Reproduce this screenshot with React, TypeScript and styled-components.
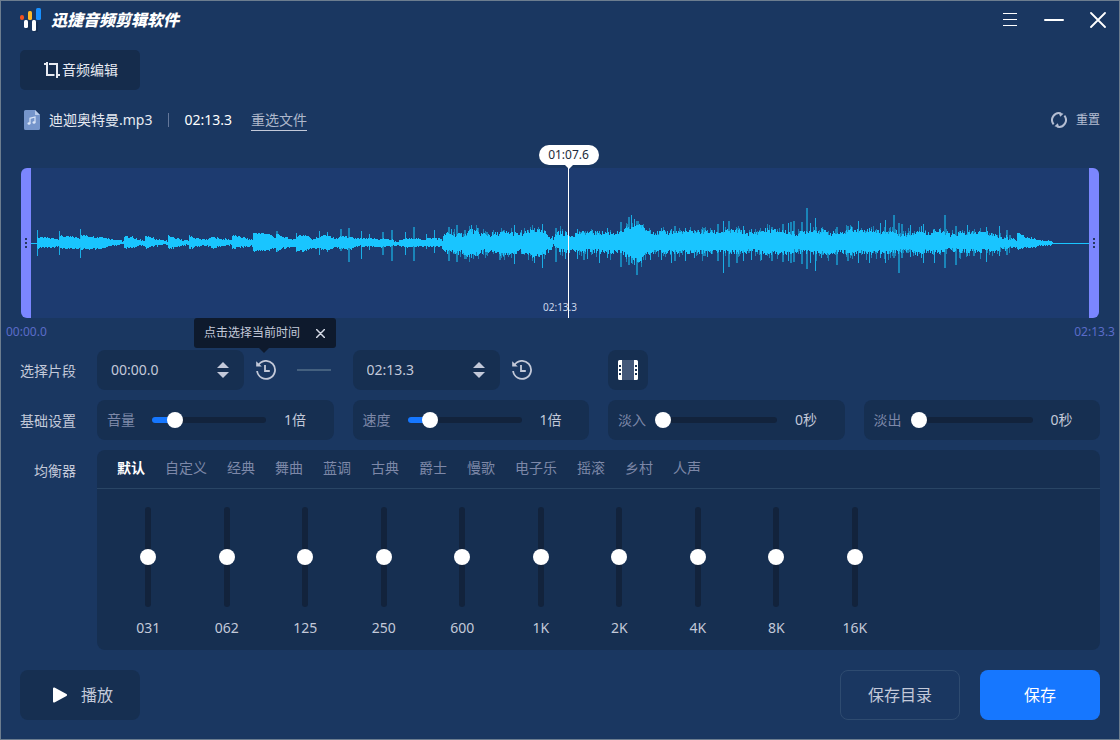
import React, { useState } from 'react';
import styled, { createGlobalStyle } from 'styled-components';

const color = {
  bg: '#1a3761',
  edge: '#6c7d8f',
  panel: '#162f51',
  tab: '#152c4c',
  track: '#12233c',
  wave: '#1d3b70',
  cyan: '#19c5ff',
  handle: '#7b86ff',
  accent: '#1677ff',
  text: '#c3c9d9',
  bright: '#e6eaf2',
  dim: '#7d88a8',
  rule: '#294565',
  tip: '#0e1a2d',
  time: '#5a6cc8',
};

const GlobalStyle = createGlobalStyle`
  *, *::before, *::after { box-sizing: border-box; }
  body {
    margin: 0;
    background: ${color.bg};
    color: ${color.text};
    font-family: "Noto Sans", "Noto Sans CJK SC", sans-serif;
    font-size: 14px;
    line-height: 20px;
  }
  button, input { font: inherit; color: inherit; margin: 0; }
  button { border: 0; padding: 0; background: none; cursor: pointer; }
  svg { display: block; flex: none; }
`;

const Window = styled.div`
  min-height: 100vh;
  display: flex;
  flex-direction: column;
  border: 1px solid ${color.edge};
  background: ${color.bg};
`;

const TitleBar = styled.header`
  display: flex;
  align-items: center;
  justify-content: space-between;
  height: 38px;
  padding: 0 11px 0 19px;
`;

const Brand = styled.h1`
  display: flex;
  align-items: center;
  gap: 8px;
  margin: 0;
  font-size: 16px;
  font-weight: 900;
  font-style: italic;
  color: #fff;
`;

const WindowControls = styled.div`
  display: flex;
  align-items: center;
  gap: 24px;
`;

const IconButton = styled.button`
  display: flex;
  align-items: center;
  justify-content: center;
  min-width: 20px;
  height: 24px;
  color: ${(p) => p.color || '#fff'};
`;

const Toolbar = styled.nav`
  display: flex;
  padding: 11px 19px 0;
`;

const ModeButton = styled.button`
  display: flex;
  align-items: center;
  justify-content: center;
  gap: 2px;
  width: 120px;
  height: 40px;
  padding-left: 2px;
  border-radius: 5px;
  background: ${color.tab};
  color: ${color.bright};
`;

const FileRow = styled.div`
  display: flex;
  align-items: center;
  height: 40px;
  margin-top: 10px;
  padding: 0 19px 0 23px;
`;

const FileName = styled.span`
  margin-left: 9px;
  color: ${color.bright};
`;

const Divider = styled.span`
  width: 1px;
  height: 14px;
  margin: 0 15px 0 16px;
  background: #64779a;
`;

const Duration = styled.span`
  color: #fff;
`;

const ReselectLink = styled.a`
  margin-left: 19px;
  border-bottom: 1px solid ${color.text};
  color: #aeb7cb;
  text-decoration: none;
`;

const ResetButton = styled.button`
  display: flex;
  align-items: center;
  gap: 9px;
  margin-left: auto;
  font-size: 12px;
  color: #b4bdd2;
`;

const Track = styled.section`
  display: flex;
  height: 150px;
  margin: 28px 20px 0;
  background: ${color.wave};
  border-radius: 6px;
`;

const Handle = styled.button<{ $side: 'left' | 'right' }>`
  display: flex;
  align-items: center;
  justify-content: center;
  width: 10px;
  border-radius: ${(p) => (p.$side === 'left' ? '6px 0 0 6px' : '0 6px 6px 0')};
  background: ${color.handle};
  color: #253762;
`;

const Stage = styled.div`
  position: relative;
  flex: 1;
  min-width: 0;
`;

const WaveSvg = styled.svg`
  width: 100%;
  height: 150px;
`;

const TrackLength = styled.span`
  position: absolute;
  left: 0;
  right: 0;
  bottom: 1px;
  font-size: 10px;
  text-align: center;
  color: #ccd6ea;
`;

const Playhead = styled.div`
  position: absolute;
  top: 0;
  bottom: 0;
  width: 1px;
  background: #fff;
`;

const PlayheadTime = styled.span`
  position: absolute;
  left: -29px;
  bottom: 153px;
  width: 60px;
  border-radius: 10px;
  background: #fff;
  color: #222b3a;
  font-size: 12px;
  text-align: center;

  &::after {
    content: '';
    position: absolute;
    top: 19px;
    left: 25px;
    border: 5px solid transparent;
    border-top-color: #fff;
    border-bottom: 0;
  }
`;

const TimeScale = styled.div`
  display: flex;
  justify-content: space-between;
  height: 32px;
  padding: 4px 4px 0 5px;
  font-size: 12px;
  color: ${color.time};
`;

const Settings = styled.main`
  display: grid;
  grid-template-columns: 56px 1fr;
  column-gap: 21px;
  row-gap: 10px;
  padding: 0 19px;
`;

const RowTitle = styled.h2`
  margin: 0;
  font-size: 14px;
  font-weight: 400;
  line-height: 42px;
  height: 40px;
  text-align: right;
  white-space: nowrap;
`;

const Quarter = styled.div`
  display: grid;
  grid-template-columns: repeat(4, 1fr);
  gap: 19px;
`;

const RangeCell = styled.div`
  display: flex;
  align-items: center;
`;

const TimeField = styled.div`
  display: flex;
  align-items: center;
  width: 147px;
  height: 40px;
  padding: 0 15px 0 14px;
  border-radius: 8px;
  background: ${color.panel};
`;

const TimeInput = styled.input`
  flex: 1;
  min-width: 0;
  padding: 0;
  border: 0;
  outline: 0;
  background: transparent;
`;

const Stepper = styled.div`
  display: flex;
  flex-direction: column;
  gap: 4px;
  color: ${color.text};
`;

const HistoryBox = styled.div`
  position: relative;
  margin-left: 12px;
`;

const Tooltip = styled.div`
  position: absolute;
  left: -62px;
  bottom: 34px;
  z-index: 2;
  display: flex;
  align-items: center;
  justify-content: space-between;
  width: 142px;
  height: 30px;
  padding: 0 11px 0 10px;
  border-radius: 3px;
  background: ${color.tip};
  font-size: 12px;
  white-space: nowrap;

  &::after {
    content: '';
    position: absolute;
    top: 30px;
    left: 65px;
    border: 5px solid transparent;
    border-top-color: ${color.tip};
    border-bottom: 0;
  }
`;

const TipClose = styled.button`
  color: #d5dae6;
`;

const Dash = styled.span`
  width: 34px;
  height: 2px;
  margin-left: 21px;
  background: #44607f;
`;

const FilmButton = styled.button`
  display: flex;
  align-items: center;
  justify-content: center;
  width: 40px;
  height: 40px;
  border-radius: 8px;
  background: ${color.panel};
`;

const Control = styled.div`
  display: flex;
  align-items: center;
  height: 40px;
  padding-left: 10px;
  border-radius: 8px;
  background: ${color.panel};
`;

const ControlLabel = styled.label`
  width: 28px;
  margin-right: 9px;
  color: ${color.dim};
`;

const ControlValue = styled.output`
  margin-left: 10px;
`;

const SliderBox = styled.div<{ $vertical?: boolean }>`
  display: grid;
  place-items: center;
  width: ${(p) => (p.$vertical ? '16px' : '130px')};
  height: ${(p) => (p.$vertical ? '116px' : '16px')};

  > * { grid-area: 1 / 1; }
`;

const Rail = styled.div<{ $vertical?: boolean }>`
  width: ${(p) => (p.$vertical ? '6px' : '114px')};
  height: ${(p) => (p.$vertical ? '100px' : '6px')};
  border-radius: 3px;
  background: ${color.track};
`;

const Fill = styled.div`
  height: 6px;
  border-radius: 3px;
  background: ${color.accent};
`;

const Range = styled.input<{ $vertical?: boolean }>`
  appearance: none;
  width: 100%;
  height: 100%;
  background: transparent;
  cursor: pointer;
  ${(p) => (p.$vertical ? 'writing-mode: vertical-lr; direction: rtl;' : '')}

  &::-webkit-slider-thumb {
    appearance: none;
    width: 16px;
    height: 16px;
    border-radius: 50%;
    background: #fff;
  }
`;

const Equalizer = styled.section`
  height: 200px;
  border-radius: 8px;
  background: ${color.panel};
`;

const Presets = styled.div`
  display: flex;
  gap: 20px;
  height: 39px;
  padding: 0 20px;
  border-bottom: 1px solid ${color.rule};
`;

const Preset = styled.button<{ $active?: boolean }>`
  height: 36px;
  font-weight: ${(p) => (p.$active ? 700 : 400)};
  color: ${(p) => (p.$active ? '#fff' : color.dim)};
`;

const Bands = styled.div`
  display: grid;
  grid-template-columns: repeat(10, 1fr);
  width: 785px;
  margin: 10px 0 0 12px;
`;

const Band = styled.label`
  display: flex;
  flex-direction: column;
  align-items: center;
  gap: 3px;
`;

const Footer = styled.footer`
  display: flex;
  gap: 20px;
  padding: 20px 19px 19px;
`;

const ActionButton = styled.button<{ $kind: 'play' | 'outline' | 'primary' }>`
  display: flex;
  align-items: center;
  justify-content: center;
  gap: 14px;
  width: 120px;
  height: 50px;
  margin-right: ${(p) => (p.$kind === 'play' ? 'auto' : '0')};
  padding-left: ${(p) => (p.$kind === 'play' ? '6px' : '0')};
  border: ${(p) => (p.$kind === 'outline' ? '1px solid #2e4b70' : '0')};
  border-radius: 8px;
  background: ${(p) =>
    p.$kind === 'primary' ? color.accent : p.$kind === 'play' ? color.panel : 'transparent'};
  color: ${(p) => (p.$kind === 'primary' ? '#fff' : color.text)};
  font-size: 16px;
`;

/* Waveform outline: x, height above the axis, depth below it. */
const outline: number[][] = [
  [6, 6, 5], [14, 5, 4], [27, 4, 4], [28, 7, 5], [39, 6, 6], [49, 5, 5], [50, 8, 6], [64, 6, 6],
  [72, 6, 5], [80, 4, 3], [92, 2, 1], [93, 6, 5], [101, 6, 5], [107, 3, 3], [113, 3, 2], [114, 7, 5],
  [124, 4, 3], [136, 2, 1], [137, 7, 6], [145, 4, 4], [157, 2, 2], [158, 7, 6], [163, 5, 4],
  [174, 3, 2], [182, 6, 5], [190, 4, 3], [200, 3, 2], [201, 8, 6], [209, 6, 4], [221, 3, 3],
  [222, 10, 8], [237, 9, 7], [244, 5, 5], [245, 9, 8], [252, 6, 5], [264, 3, 4], [265, 7, 8],
  [274, 8, 8], [281, 4, 5], [289, 6, 6], [296, 8, 7], [304, 4, 4], [311, 7, 6], [319, 5, 6],
  [329, 4, 3], [354, 4, 4], [361, 3, 3], [366, 1, 2], [374, 4, 4], [384, 5, 4], [389, 3, 3],
  [399, 5, 4], [411, 4, 4], [414, 9, 8], [424, 8, 9], [434, 8, 10], [439, 13, 13], [449, 9, 9],
  [459, 8, 8], [469, 10, 11], [481, 10, 12], [489, 8, 8], [502, 13, 13], [514, 10, 10],
  [522, 4, 3], [526, 11, 7], [539, 8, 8], [549, 10, 8], [589, 10, 9], [594, 13, 12], [601, 16, 15],
  [607, 19, 19], [614, 13, 12], [624, 10, 9], [650, 11, 9], [688, 11, 9], [704, 12, 9],
  [720, 9, 8], [735, 13, 10], [755, 11, 10], [765, 9, 8], [780, 13, 9], [798, 10, 10],
  [810, 9, 8], [820, 14, 11], [829, 12, 9], [840, 13, 10], [850, 10, 9], [855, 11, 9],
  [862, 11, 9], [872, 8, 8], [880, 9, 8], [887, 13, 11], [895, 9, 8], [904, 12, 9], [915, 10, 8],
  [920, 7, 6], [929, 10, 8], [939, 9, 8], [949, 11, 8], [959, 9, 8], [969, 6, 6], [979, 5, 5],
  [984, 3, 4], [985, 2, 3], [986, 11, 7], [994, 6, 5], [1009, 3, 3], [1019, 2, 2], [1022, 0, 0],
];

/* Transient peaks: x, up, down, 1 when drawn faint. */
const peaks: number[][] = [
  [6, 13, 13, 0], [28, 12, 12, 0], [49, 14, 15, 0], [158, 8, 6, 0], [245, 12, 9, 1], [265, 10, 9, 0],
  [288, 12, 12, 0], [296, 11, 9, 0], [309, 14, 8, 1], [317, 15, 19, 1], [330, 12, 16, 0],
  [338, 9, 7, 0], [351, 11, 12, 1], [360, 13, 18, 1], [374, 11, 12, 0], [382, 16, 18, 1],
  [395, 9, 6, 0], [403, 13, 10, 0], [417, 16, 18, 1], [420, 14, 9, 0], [425, 18, 19, 1],
  [433, 13, 16, 1], [440, 18, 15, 0], [446, 15, 10, 0], [468, 6, 17, 1], [483, 18, 21, 0],
  [490, 13, 11, 0], [503, 15, 20, 0], [511, 19, 25, 0], [524, 15, 19, 1], [534, 12, 16, 0],
  [546, 14, 16, 0], [552, 11, 17, 1], [556, 9, 16, 0], [561, 13, 11, 0], [568, 12, 20, 0],
  [576, 15, 15, 0], [589, 21, 24, 1], [595, 17, 16, 0], [597, 26, 22, 1], [600, 28, 20, 0],
  [603, 24, 22, 0], [605, 22, 32, 1], [610, 18, 20, 0], [619, 13, 17, 0], [630, 15, 17, 0],
  [640, 14, 20, 0], [643, 17, 18, 1], [654, 15, 18, 0], [663, 13, 15, 0], [672, 15, 13, 1],
  [676, 13, 14, 0], [686, 19, 18, 1], [692, 22, 30, 0], [697, 22, 24, 1], [705, 15, 20, 1],
  [712, 17, 18, 0], [720, 14, 17, 0], [730, 12, 17, 0], [740, 16, 18, 1], [751, 19, 19, 1],
  [757, 20, 18, 0], [759, 21, 20, 1], [762, 22, 19, 1], [770, 21, 21, 1], [775, 35, 26, 1],
  [779, 20, 20, 0], [784, 25, 28, 0], [790, 15, 15, 0], [805, 16, 22, 1], [816, 17, 18, 1],
  [827, 22, 20, 0], [838, 14, 20, 0], [849, 20, 15, 0], [854, 23, 20, 0], [862, 28, 15, 1],
  [867, 20, 30, 1], [870, 19, 15, 1], [879, 18, 14, 0], [890, 17, 15, 0], [892, 19, 20, 0],
  [903, 14, 20, 0], [913, 28, 25, 1], [924, 17, 22, 1], [936, 18, 13, 0], [942, 12, 13, 1],
  [955, 16, 19, 0], [968, 17, 13, 0], [975, 13, 12, 1],
];

const noise = (n: number) => {
  const v = Math.sin(n * 12.9898) * 43758.5453;
  return v - Math.floor(v);
};

const AXIS = 75;

function buildWave() {
  let body = '';
  let bright = '';
  let faint = '';
  const bar = (x: number, up: number, down: number, w = 1) =>
    `M${x} ${AXIS - up}h${w}v${up + down}h-${w}z`;
  for (let i = 0; i < outline.length - 1; i += 1) {
    const [x0, u0, d0] = outline[i];
    const [x1, u1, d1] = outline[i + 1];
    for (let x = x0; x < x1; x += 1) {
      const t = (x - x0) / (x1 - x0);
      const up = u0 + (u1 - u0) * t;
      const down = d0 + (d1 - d0) * t;
      const loud = x > 410 && x < 980;
      const j = loud ? 5 : 2;
      const a = Math.max(0, Math.round(up + (noise(x) - 0.5) * j));
      const b = Math.max(1, Math.round(down + (noise(x + 2000) - 0.5) * j));
      body += bar(x, a, b);
      if (loud && noise(x + 5000) > 0.75) {
        faint += bar(x, a + Math.round(noise(x + 7000) * 5), b + Math.round(noise(x + 9000) * 7));
      }
    }
  }
  peaks.forEach(([x, up, down, soft]) => {
    if (soft) faint += bar(x, up, down, 2);
    else bright += bar(x, up, down);
  });
  return { body, bright, faint };
}

const wave = buildWave();

function Waveform() {
  return (
    <WaveSvg viewBox="0 0 1058 150" preserveAspectRatio="none" shapeRendering="crispEdges" aria-hidden="true">
      <path d={wave.faint} fill="#1a85b9" />
      <path d={wave.bright} fill="#1aaee6" />
      <path d={wave.body} fill={color.cyan} />
      <path d="M0 75h7v1h-7zM1018 75h40v1h-40z" fill={color.cyan} />
    </WaveSvg>
  );
}

const Logo = () => (
  <svg width="23" height="25" viewBox="0 0 23 25" aria-hidden="true">
    <path d="M6 12h4v10H7l-1-1zM14 14h4v10h-3l-1-1z" fill="#102849" opacity=".6" />
    <rect x="0" y="7" width="4" height="5" rx="2" fill="#f4511e" />
    <rect x="4" y="12" width="4" height="8" rx="1.5" fill="#fff" />
    <rect x="8" y="3" width="4" height="9" rx="1.5" fill="#fdb92c" />
    <rect x="12" y="12" width="4" height="11" rx="1.5" fill="#fff" />
    <rect x="16" y="0" width="5" height="12" rx="1.5" fill="#1890ff" />
  </svg>
);

const MenuIcon = () => (
  <svg width="14" height="14" viewBox="0 0 14 14" shapeRendering="crispEdges" aria-hidden="true">
    <path d="M0 0h14v1H0zM0 6h14v1H0zM0 12h14v1H0z" fill="currentColor" />
  </svg>
);

const MinimizeIcon = () => (
  <svg width="20" height="2" viewBox="0 0 20 2" aria-hidden="true">
    <rect width="20" height="2" rx="1" fill="currentColor" />
  </svg>
);

const CrossIcon = ({ size, weight }: { size: number; weight: number }) => (
  <svg width={size} height={size} viewBox="0 0 16 16" aria-hidden="true">
    <path d="M1 1l14 14M15 1L1 15" stroke="currentColor" strokeWidth={weight} strokeLinecap="round" />
  </svg>
);

const CropIcon = () => (
  <svg width="16" height="16" viewBox="0 0 16 16" aria-hidden="true">
    <path d="M0 2h3M3 0v13h7.500M5 2h8v11M14 13h2M13 13v3" fill="none" stroke="currentColor" strokeWidth="2" />
  </svg>
);

const MusicFileIcon = () => (
  <svg width="16" height="20" viewBox="0 0 16 20" aria-hidden="true">
    <path d="M1.500 0H11l5 5v13.500a1.500 1.500 0 0 1-1.500 1.500h-13A1.500 1.500 0 0 1 0 18.500v-17A1.500 1.500 0 0 1 1.500 0z" fill="#7595cb" />
    <path d="M11 0l5 5h-5z" fill="#b9cbea" />
    <path d="M6 13.500V8.300l5-1.300v5.500" fill="none" stroke="#dbe6f8" strokeWidth="1.200" />
    <ellipse cx="5" cy="13.500" rx="1.500" ry="1.300" fill="#dbe6f8" />
    <ellipse cx="10" cy="12.500" rx="1.500" ry="1.300" fill="#dbe6f8" />
  </svg>
);

const ResetIcon = () => (
  <svg width="16" height="16" viewBox="0 0 16 16" aria-hidden="true">
    <path
      d="M2.600 12.300A6.900 6.900 0 0 1 10 1.400M13.400 3.700A6.900 6.900 0 0 1 6 14.600"
      fill="none"
      stroke="currentColor"
      strokeWidth="2"
    />
    <path d="M7.500.3l5 1.500-3.300 3zM8.500 15.700l-5-1.500 3.300-3z" fill="currentColor" />
  </svg>
);

const GripIcon = () => (
  <svg width="2" height="11" viewBox="0 0 2 11" shapeRendering="crispEdges" aria-hidden="true">
    <path d="M0 0h2v2H0zM0 4h2v2H0zM0 8h2v2H0z" fill="currentColor" />
  </svg>
);

const ArrowIcon = ({ down }: { down?: boolean }) => (
  <svg width="12" height="6" viewBox="0 0 12 6" aria-hidden="true">
    <path d={down ? 'M0 0h12L6 6z' : 'M0 6h12L6 0z'} fill="currentColor" />
  </svg>
);

const HistoryIcon = () => (
  <svg width="20" height="20" viewBox="0 0 20 20" aria-hidden="true">
    <path d="M2.300 5.300A9 9 0 1 1 1.100 11" fill="none" stroke="currentColor" strokeWidth="1.800" />
    <path d="M.2 1.200v5.300h5.600z" fill="currentColor" />
    <path d="M9 5v6h4.800" fill="none" stroke="currentColor" strokeWidth="1.800" />
  </svg>
);

const FilmIcon = () => (
  <svg width="20" height="20" viewBox="0 0 20 20" aria-hidden="true">
    <rect x="4" width="12" height="20" fill="#43587a" />
    <path d="M1.500 0H4v20H1.500A1.500 1.500 0 0 1 0 18.500v-17A1.500 1.500 0 0 1 1.500 0zM16 0h2.500A1.500 1.500 0 0 1 20 1.500v17a1.500 1.500 0 0 1-1.500 1.500H16z" fill="#fff" />
    <path d="M1 5h2v2H1zM1 9h2v2H1zM1 13h2v2H1zM17 5h2v2h-2zM17 9h2v2h-2zM17 13h2v2h-2z" fill="#162f51" />
  </svg>
);

const PlayIcon = () => (
  <svg width="14" height="16" viewBox="0 0 14 16" aria-hidden="true">
    <path d="M1 1.500l12 6.500-12 6.500z" fill="#fff" stroke="#fff" strokeWidth="2" strokeLinejoin="round" />
  </svg>
);

const presets = ['默认', '自定义', '经典', '舞曲', '蓝调', '古典', '爵士', '慢歌', '电子乐', '摇滚', '乡村', '人声'];
const bands = ['031', '062', '125', '250', '600', '1K', '2K', '4K', '8K', '16K'];

function SliderControl({ id, label, initial, unit }: { id: string; label: string; initial: number; unit: string }) {
  const [value, setValue] = useState(initial);
  return (
    <Control>
      <ControlLabel htmlFor={id}>{label}</ControlLabel>
      <SliderBox>
        <Rail>
          <Fill style={{ width: `${value}%` }} />
        </Rail>
        <Range id={id} type="range" min={0} max={100} value={value} onChange={(e) => setValue(Number(e.target.value))} />
      </SliderBox>
      <ControlValue htmlFor={id}>{Math.round(value / 20)}{unit}</ControlValue>
    </Control>
  );
}

function TimeStepper({ label, initial }: { label: string; initial: string }) {
  const [value, setValue] = useState(initial);
  return (
    <TimeField>
      <TimeInput type="text" aria-label={label} value={value} onChange={(e) => setValue(e.target.value)} />
      <Stepper>
        <button type="button" aria-label="增加"><ArrowIcon /></button>
        <button type="button" aria-label="减少"><ArrowIcon down /></button>
      </Stepper>
    </TimeField>
  );
}

export default function App() {
  const [preset, setPreset] = useState('默认');
  const [tipOpen, setTipOpen] = useState(true);
  const position = 67.6;
  const total = 133.3;

  return (
    <>
      <GlobalStyle />
      <Window>
        <TitleBar>
          <Brand><Logo />迅捷音频剪辑软件</Brand>
          <WindowControls>
            <IconButton type="button" aria-label="菜单"><MenuIcon /></IconButton>
            <IconButton type="button" aria-label="最小化"><MinimizeIcon /></IconButton>
            <IconButton type="button" aria-label="关闭"><CrossIcon size={16} weight={1.8} /></IconButton>
          </WindowControls>
        </TitleBar>

        <Toolbar>
          <ModeButton type="button"><CropIcon />音频编辑</ModeButton>
        </Toolbar>

        <FileRow>
          <MusicFileIcon />
          <FileName>迪迦奥特曼.mp3</FileName>
          <Divider />
          <Duration>02:13.3</Duration>
          <ReselectLink href="#reselect">重选文件</ReselectLink>
          <ResetButton type="button"><ResetIcon />重置</ResetButton>
        </FileRow>

        <Track>
          <Handle type="button" $side="left" aria-label="起点"><GripIcon /></Handle>
          <Stage>
            <Waveform />
            <TrackLength>02:13.3</TrackLength>
            <Playhead style={{ left: `${(position / total) * 100}%` }}>
              <PlayheadTime>01:07.6</PlayheadTime>
            </Playhead>
          </Stage>
          <Handle type="button" $side="right" aria-label="终点"><GripIcon /></Handle>
        </Track>
        <TimeScale>
          <span>00:00.0</span>
          <span>02:13.3</span>
        </TimeScale>

        <Settings>
          <RowTitle>选择片段</RowTitle>
          <Quarter>
            <RangeCell>
              <TimeStepper label="开始时间" initial="00:00.0" />
              <HistoryBox>
                <IconButton type="button" color={color.text} aria-label="选择当前时间为起点"><HistoryIcon /></IconButton>
                {tipOpen && (
                  <Tooltip role="tooltip">
                    点击选择当前时间
                    <TipClose type="button" aria-label="关闭提示" onClick={() => setTipOpen(false)}>
                      <CrossIcon size={9} weight={2.6} />
                    </TipClose>
                  </Tooltip>
                )}
              </HistoryBox>
              <Dash />
            </RangeCell>
            <RangeCell>
              <TimeStepper label="结束时间" initial="02:13.3" />
              <HistoryBox>
                <IconButton type="button" color={color.text} aria-label="选择当前时间为终点"><HistoryIcon /></IconButton>
              </HistoryBox>
            </RangeCell>
            <FilmButton type="button" aria-label="片段"><FilmIcon /></FilmButton>
          </Quarter>

          <RowTitle>基础设置</RowTitle>
          <Quarter>
            <SliderControl id="volume" label="音量" initial={20} unit="倍" />
            <SliderControl id="speed" label="速度" initial={20} unit="倍" />
            <SliderControl id="fade-in" label="淡入" initial={0} unit="秒" />
            <SliderControl id="fade-out" label="淡出" initial={0} unit="秒" />
          </Quarter>

          <RowTitle>均衡器</RowTitle>
          <Equalizer>
            <Presets role="tablist">
              {presets.map((name) => (
                <Preset key={name} type="button" role="tab" aria-selected={name === preset} $active={name === preset} onClick={() => setPreset(name)}>
                  {name}
                </Preset>
              ))}
            </Presets>
            <Bands>
              {bands.map((name) => (
                <Band key={name}>
                  <SliderBox $vertical>
                    <Rail $vertical />
                    <Range $vertical type="range" min={-12} max={12} defaultValue={0} />
                  </SliderBox>
                  {name}
                </Band>
              ))}
            </Bands>
          </Equalizer>
        </Settings>

        <Footer>
          <ActionButton type="button" $kind="play"><PlayIcon />播放</ActionButton>
          <ActionButton type="button" $kind="outline">保存目录</ActionButton>
          <ActionButton type="button" $kind="primary">保存</ActionButton>
        </Footer>
      </Window>
    </>
  );
}
